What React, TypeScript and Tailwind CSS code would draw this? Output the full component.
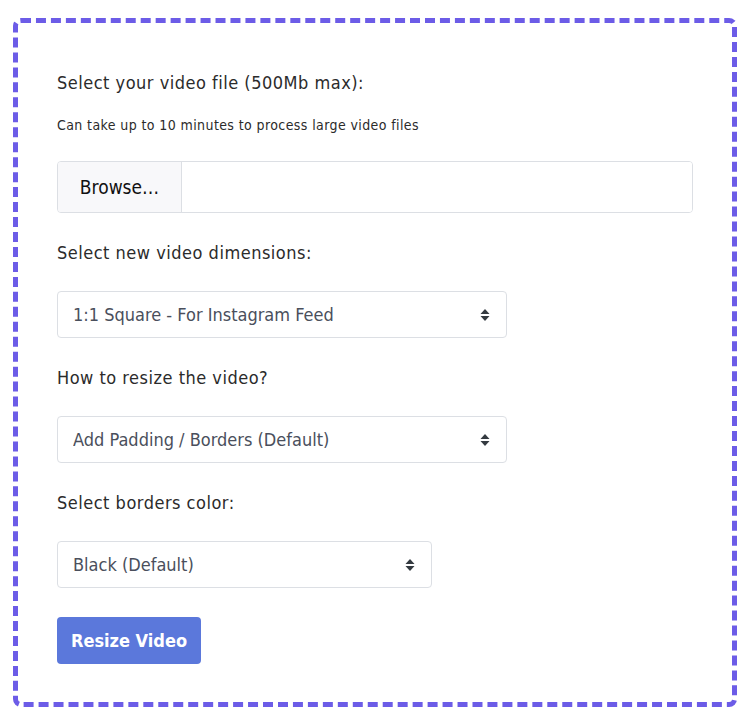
import React, {useState} from "react";

const font = {fontFamily: '"DejaVu Sans", sans-serif', fontStretch: 'condensed'};

function Arrows() {
    return (
        <svg width="10" height="14" viewBox="0 0 10 14" className="absolute right-[17px] top-1/2 -translate-y-1/2 pointer-events-none">
            <path d="M5 1 L9.5 6 H0.5 Z" fill="#343a40"/>
            <path d="M5 13 L9.5 8 H0.5 Z" fill="#343a40"/>
        </svg>
    )
}

function SelectBox({value, options, width}: {value: string, options: string[], width: string}) {
    const [val, setVal] = useState(value)
    return (
        <div className={"relative " + width}>
            <select value={val} onChange={(e) => setVal(e.target.value)}
                    className="appearance-none w-full h-[47px] pl-[15px] pr-8 bg-white border border-[#dcdfe4] rounded-[4px] text-[18px] text-[#4a4f5c] outline-none"
                    style={font}>
                {options.map((o) => <option key={o}>{o}</option>)}
            </select>
            <Arrows/>
        </div>
    )
}

export default function App() {
    return (
        <div className="w-[750px] h-[720px] bg-white pt-[18px] pl-[13px]" style={font}>
            <div className="w-[724px] h-[689px] border-[5px] border-dashed border-[#6c5ce7] rounded-[8px] pl-[39px] pt-[47px] text-[#2b2b2b]">
                <div className="text-[18px] tracking-[0.5px] leading-[26px]">Select your video file (500Mb max):</div>
                <div className="text-[14px] tracking-[0.4px] mt-[19px] leading-[20px]">Can take up to 10 minutes to process large video files</div>

                <div className="flex mt-[26px] w-[636px] h-[52px] border border-[#dcdfe4] rounded-[4px] overflow-hidden">
                    <div className="w-[124px] bg-[#f8f8fa] border-r border-[#dcdfe4] flex items-center justify-center text-[19px] text-[#111]">Browse…</div>
                    <div className="flex-1 bg-white"></div>
                </div>

                <div className="text-[18px] tracking-[0.5px] mt-[27px] leading-[26px]">Select new video dimensions:</div>
                <div className="mt-[25px]">
                    <SelectBox width="w-[450px]" value="1:1 Square - For Instagram Feed"
                               options={["1:1 Square - For Instagram Feed", "9:16 Vertical - For Stories", "16:9 Horizontal - For YouTube"]}/>
                </div>

                <div className="text-[18px] tracking-[0.5px] mt-[27px] leading-[26px]">How to resize the video?</div>
                <div className="mt-[25px]">
                    <SelectBox width="w-[450px]" value="Add Padding / Borders (Default)"
                               options={["Add Padding / Borders (Default)", "Crop Video", "Stretch Video"]}/>
                </div>

                <div className="text-[18px] tracking-[0.5px] mt-[27px] leading-[26px]">Select borders color:</div>
                <div className="mt-[25px]">
                    <SelectBox width="w-[375px]" value="Black (Default)"
                               options={["Black (Default)", "White", "Blur"]}/>
                </div>

                <button className="mt-[29px] w-[144px] h-[47px] bg-[#5b78db] rounded-[4px] text-white text-[18px] font-bold" style={font}>
                    Resize Video
                </button>
            </div>
        </div>
    )
}
